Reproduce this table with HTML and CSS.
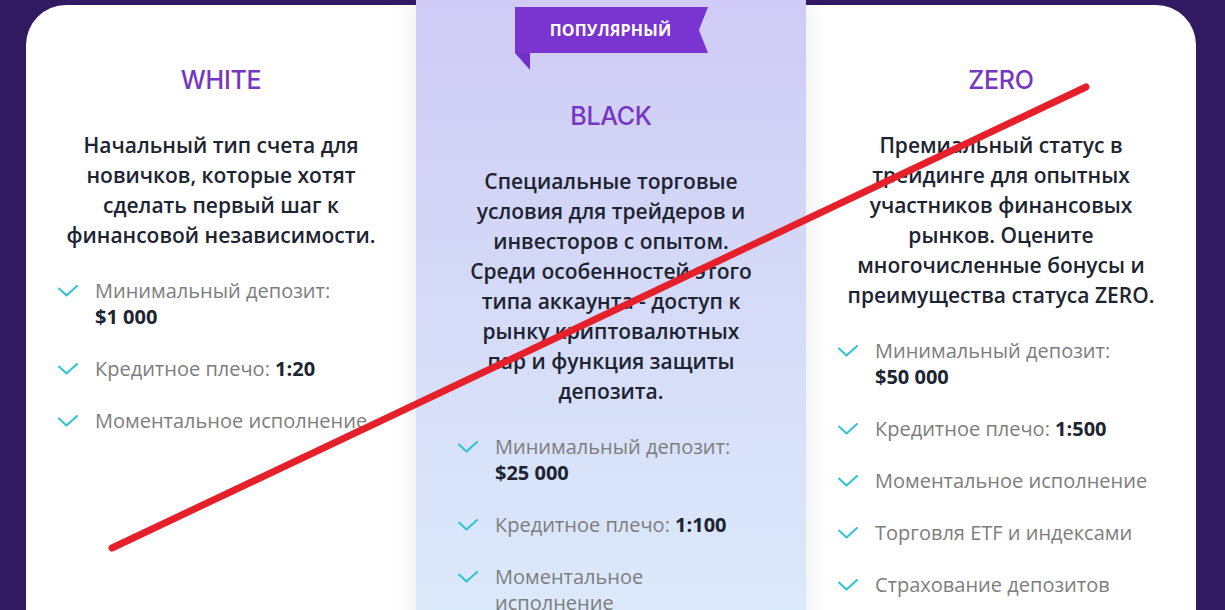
FILE: index.html
```html
<!DOCTYPE html>
<html lang="ru">
<head>
<meta charset="utf-8">
<title>Типы счетов</title>
<link rel="stylesheet" href="styles.css">
</head>
<body>
<div class="page">
  <div class="plans">
    <section class="plan">
      <h2 class="plan-title">WHITE</h2>
      <p class="plan-desc">Начальный тип счета для<br>новичков, которые хотят<br>сделать первый шаг к<br>финансовой независимости.</p>
      <ul class="features">
        <li><svg class="check" viewBox="0 0 20 12"><path d="M1 3.5 L8.5 10.5 L19 1"/></svg><span>Минимальный депозит:<br><b>$1 000</b></span></li>
        <li><svg class="check" viewBox="0 0 20 12"><path d="M1 3.5 L8.5 10.5 L19 1"/></svg><span>Кредитное плечо: <b>1:20</b></span></li>
        <li><svg class="check" viewBox="0 0 20 12"><path d="M1 3.5 L8.5 10.5 L19 1"/></svg><span>Моментальное исполнение</span></li>
      </ul>
    </section>
    <section class="plan plan-popular">
      <div class="ribbon">
        <div class="ribbon-body">ПОПУЛЯРНЫЙ</div>
        <div class="ribbon-fold"></div>
      </div>
      <h2 class="plan-title">BLACK</h2>
      <p class="plan-desc">Специальные торговые<br>условия для трейдеров и<br>инвесторов с опытом.<br>Среди особенностей этого<br>типа аккаунта - доступ к<br>рынку криптовалютных<br>пар и функция защиты<br>депозита.</p>
      <ul class="features">
        <li><svg class="check" viewBox="0 0 20 12"><path d="M1 3.5 L8.5 10.5 L19 1"/></svg><span>Минимальный депозит:<br><b>$25 000</b></span></li>
        <li><svg class="check" viewBox="0 0 20 12"><path d="M1 3.5 L8.5 10.5 L19 1"/></svg><span>Кредитное плечо: <b>1:100</b></span></li>
        <li><svg class="check" viewBox="0 0 20 12"><path d="M1 3.5 L8.5 10.5 L19 1"/></svg><span>Моментальное<br>исполнение</span></li>
      </ul>
    </section>
    <section class="plan">
      <h2 class="plan-title">ZERO</h2>
      <p class="plan-desc">Премиальный статус в<br>трейдинге для опытных<br>участников финансовых<br>рынков. Оцените<br>многочисленные бонусы и<br>преимущества статуса ZERO.</p>
      <ul class="features">
        <li><svg class="check" viewBox="0 0 20 12"><path d="M1 3.5 L8.5 10.5 L19 1"/></svg><span>Минимальный депозит:<br><b>$50 000</b></span></li>
        <li><svg class="check" viewBox="0 0 20 12"><path d="M1 3.5 L8.5 10.5 L19 1"/></svg><span>Кредитное плечо: <b>1:500</b></span></li>
        <li><svg class="check" viewBox="0 0 20 12"><path d="M1 3.5 L8.5 10.5 L19 1"/></svg><span>Моментальное исполнение</span></li>
        <li><svg class="check" viewBox="0 0 20 12"><path d="M1 3.5 L8.5 10.5 L19 1"/></svg><span>Торговля ETF и индексами</span></li>
        <li><svg class="check" viewBox="0 0 20 12"><path d="M1 3.5 L8.5 10.5 L19 1"/></svg><span>Страхование депозитов</span></li>
      </ul>
    </section>
  </div>
  <svg class="strike" viewBox="0 0 1225 610" width="1225" height="610"><line x1="112" y1="548" x2="1086" y2="87"/></svg>
</div>
</body>
</html>
```
FILE: styles.css
```css
* { box-sizing: border-box; }
html, body { margin: 0; padding: 0; }
body {
  background: #311a62;
  font-family: "Open Sans", "Liberation Sans", sans-serif;
  width: 1225px;
  height: 610px;
  overflow: hidden;
}
.page {
  position: relative;
  padding: 5px 0 0 26px;
  height: 610px;
}
.plans {
  width: 1170px;
  height: 700px;
  background: #ffffff;
  border-radius: 40px 40px 0 0;
  display: grid;
  grid-template-columns: 390px 390px 390px;
}
.plan {
  padding: 60px 0 0 32px;
  display: flex;
  flex-direction: column;
  align-items: stretch;
}
.plan-popular {
  margin-top: -5px;
  padding: 7px 0 0 42px;
  background: linear-gradient(180deg, #cfcbf6 0%, #d6ddf8 50%, #ddeefc 100%);
  box-shadow: 0 0 24px rgba(0, 0, 0, 0.09);
  position: relative;
  z-index: 1;
}
.ribbon {
  width: 193px;
  margin: 0 0 31px 57px;
  display: flex;
  flex-direction: column;
}
.ribbon-body {
  height: 46px;
  background: #7a35d1;
  color: #ffffff;
  font-weight: 700;
  font-size: 16px;
  letter-spacing: 0.2px;
  display: flex;
  align-items: center;
  justify-content: center;
  padding-right: 2px;
  clip-path: polygon(0 0, 100% 0, 95.3% 50%, 100% 100%, 0 100%);
}
.ribbon-fold {
  width: 15px;
  height: 17px;
  background: #7330c8;
  clip-path: polygon(0 0, 100% 0, 100% 100%);
}
.plan-title {
  margin: 0 32px 0 0;
  text-align: center;
  font-family: "Inter", "Open Sans", sans-serif;
  font-weight: 500;
  font-size: 25px;
  line-height: 30px;
  color: #7537c1;
  letter-spacing: -0.3px;
}
.plan-popular .plan-title { margin-right: 42px; }
.plan-desc {
  margin: 35px 32px 0 0;
  text-align: center;
  font-size: 21px;
  line-height: 30px;
  font-weight: 600;
  color: #1d2431;
  white-space: nowrap;
}
.plan-popular .plan-desc { margin-right: 42px; }
.features {
  list-style: none;
  margin: 28px 0 0 0;
  padding: 0;
  display: flex;
  flex-direction: column;
  gap: 26px;
}
.features li {
  display: flex;
  align-items: flex-start;
  gap: 17px;
  font-size: 20px;
  line-height: 26px;
  color: #7d7d7d;
  white-space: nowrap;
}
.features b {
  font-weight: 700;
  color: #1d2431;
}
.check {
  flex: none;
  width: 20px;
  height: 12px;
  margin-top: 7px;
  fill: none;
  stroke: #2ec3d7;
  stroke-width: 2;
  stroke-linecap: round;
  stroke-linejoin: round;
}
.strike {
  position: absolute;
  left: 0;
  top: 0;
  z-index: 5;
  pointer-events: none;
}
.strike line {
  stroke: #e5202b;
  stroke-width: 7;
  stroke-linecap: round;
}
```
